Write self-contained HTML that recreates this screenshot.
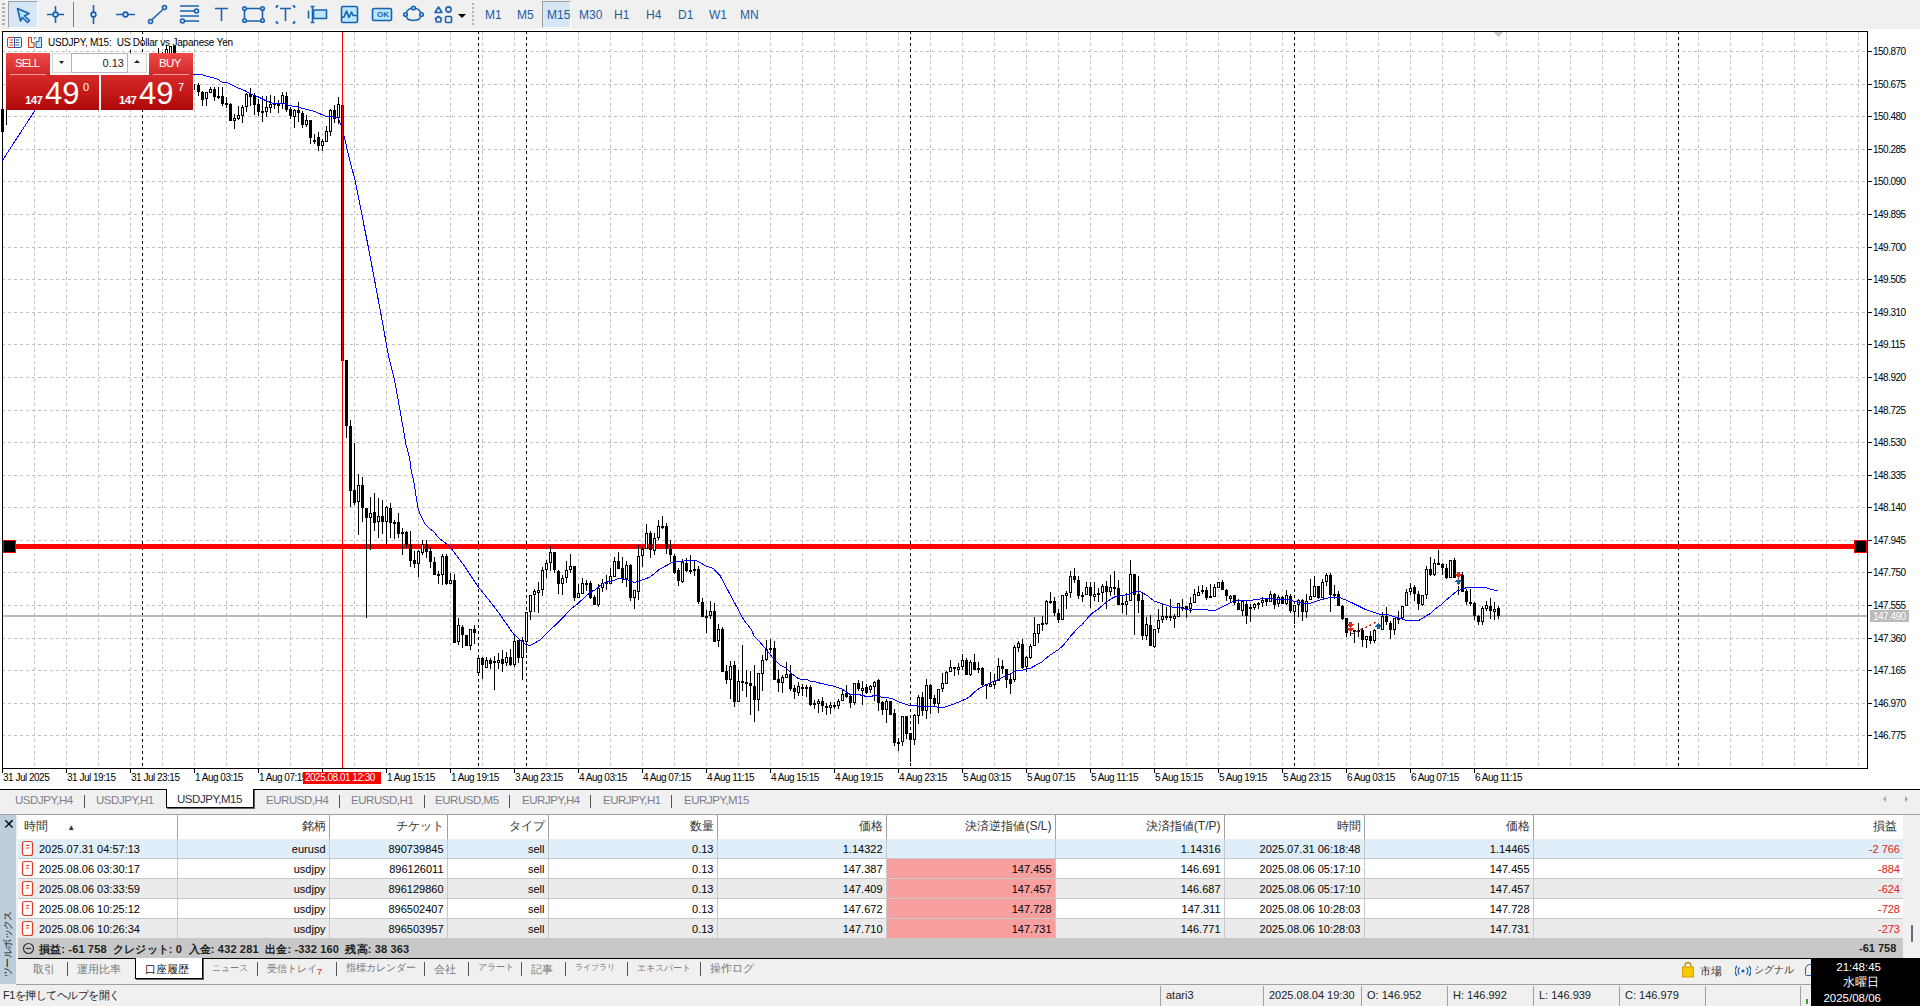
<!DOCTYPE html>
<html><head><meta charset="utf-8">
<style>
*{margin:0;padding:0;box-sizing:border-box}
html,body{width:1920px;height:1006px;overflow:hidden;background:#f0f0f0;font-family:"Liberation Sans",sans-serif;color:#000}
.a{position:absolute}
.pl{font-family:"Liberation Sans",sans-serif;font-size:10px;letter-spacing:-0.5px;fill:#000}
.tb{position:absolute;top:0;left:0;width:1920px;height:29px;background:#f0f0f0}
.tf{position:absolute;top:8px;font-size:12px;color:#1c5ba3;}
.sel{position:absolute;background:#d5e6f5;border-left:1px solid #a0a0a0;border-top:1px solid #a0a0a0;border-right:1px solid #fff;border-bottom:1px solid #fff}
.ctab{position:absolute;top:794px;font-size:11.5px;letter-spacing:-0.45px;color:#7d7d8c;white-space:nowrap}
.csep{position:absolute;top:795px;width:1px;height:13px;background:#555}
table.t{position:absolute;left:18px;top:815px;border-collapse:collapse;font-size:11px;table-layout:fixed}
.t td{height:19px;border-right:1px solid #c8c8c8;border-bottom:1px solid #c8c8c8;text-align:right;padding:1px 3px 0 0;line-height:18px;white-space:nowrap;overflow:hidden}
.t tr.h td{height:24px;vertical-align:top;padding-top:2px;background:#fff;font-size:12px;color:#333;border-bottom:none;border-right:1px solid #a0a0a0}
.t td:last-child{border-right:none}
.t tr.r1 td{background:#e0eefa;height:18px}
.t tr.w td{background:#fff}
.t tr.g td{background:#ebebeb}
.t td.pk{background:#f8a0a0 !important}
.t td.neg{color:#e02020}
.btab{position:absolute;top:962px;font-size:11px;color:#7a7a7a;white-space:nowrap;height:16px}
.bsep{position:absolute;top:962px;width:1px;height:14px;background:#555}
.st{position:absolute;top:989px;font-size:11px;color:#222;white-space:nowrap}
.ssep{position:absolute;top:986px;width:1px;height:20px;background:#a0a0a0}
</style></head><body>
<!-- toolbar -->
<div class="tb">
  <div class="a" style="left:2px;top:3px;width:3px;height:24px;background:repeating-linear-gradient(#b0b0b0 0 2px,transparent 2px 4px)"></div>
  <div class="sel" style="left:8px;top:1px;width:30px;height:27px"></div>
  <div class="sel" style="left:542px;top:1px;width:29px;height:27px"></div>
  <div class="a" style="left:73px;top:2px;width:1px;height:25px;background:#7a7a88"></div>
  <div class="a" style="left:472px;top:3px;width:2px;height:24px;background:repeating-linear-gradient(#b0b0b0 0 2px,transparent 2px 4px)"></div>
  <svg class="a" style="left:0;top:0" width="480" height="29" fill="none" stroke="#1a62b0" stroke-width="1.6" stroke-linejoin="round">
    <!-- cursor -->
    <path d="M17.5 8.5L29 13.5L24.5 16L29.5 20.5L27.5 22.5L22.5 17.5L20.5 21Z" fill="#aee0f8"/>
    <!-- crosshair -->
    <path d="M47 14.5H53M58 14.5H64M55.5 6V12M55.5 17V23"/><circle cx="55.5" cy="14.5" r="2.4" fill="#c8ecfb"/>
    <!-- vline -->
    <path d="M93.5 5V12M93.5 17V24"/><circle cx="93.5" cy="14.5" r="2.4" fill="#c8ecfb"/>
    <!-- hline -->
    <path d="M116 14.5H123M128 14.5H135"/><circle cx="125.5" cy="14.5" r="2.4" fill="#c8ecfb"/>
    <!-- trend -->
    <path d="M151.5 20L163.5 9"/><circle cx="150.5" cy="21.5" r="2" fill="#c8ecfb"/><circle cx="164.5" cy="7.5" r="2" fill="#c8ecfb"/>
    <!-- channel -->
    <path d="M180 6H199M180 11H194M180 16H199M184 21H199"/><circle cx="196.5" cy="11" r="2" fill="#c8ecfb"/><circle cx="182.5" cy="21" r="2" fill="#c8ecfb"/>
    <!-- T -->
    <path d="M215 8.5H228M221.5 8.5V21"/>
    <!-- rect -->
    <path d="M246 8.5H261M246 21H261M244.5 10V19.5M262.5 10V19.5"/><circle cx="244.5" cy="8.5" r="1.8" fill="#c8ecfb"/><circle cx="262.5" cy="8.5" r="1.8" fill="#c8ecfb"/><circle cx="244.5" cy="20.5" r="1.8" fill="#c8ecfb"/><circle cx="262.5" cy="20.5" r="1.8" fill="#c8ecfb"/>
    <!-- text label -->
    <path d="M276.5 8V6H278.5M292.5 6H294.5V8M276.5 21V23H278.5M292.5 23H294.5V21M280 8.5H291M285.5 8.5V21"/>
    <!-- edit -->
    <path d="M308.5 10.5V18.5M312.5 6.5V22.5M310.5 6.5H314.5M310.5 22.5H314.5"/><rect x="313.5" y="10" width="13" height="8.5" fill="#b8e6fa"/>
    <!-- chart -->
    <rect x="341.5" y="6.5" width="16" height="16" rx="1.5" fill="#b8e6fa"/><path d="M342 17H344L346.5 11L349 17.5L351.5 12L353 15.5H357"/>
    <!-- ok -->
    <rect x="372.5" y="8.5" width="19" height="12" rx="1.5" fill="#b8e6fa"/>
    <!-- ellipse -->
    <path d="M406 14.5C406 10 410 8 413.5 8C417 8 421 10 421 14.5C421 19 417 20.5 413.5 20.5C410 20.5 406 19 406 14.5Z"/><circle cx="413.5" cy="8" r="1.8" fill="#c8ecfb"/><circle cx="405.5" cy="14.5" r="1.8" fill="#c8ecfb"/><circle cx="421.5" cy="14.5" r="1.8" fill="#c8ecfb"/>
    <!-- shapes -->
    <path d="M438.5 7L442 12.5H435Z"/><circle cx="448.5" cy="9.5" r="2.6"/><path d="M438.5 16.5L441.5 18.5L440.5 22H436.5L435.5 18.5Z"/><rect x="445.5" y="16.5" width="6" height="6" rx="1"/>
    <path d="M458 14H466L462 18Z" fill="#000" stroke="none"/>
  </svg>
  <div class="a" style="left:377px;top:10px;font-size:8px;font-weight:bold;color:#1a62b0">OK</div>
  <div class="tf" style="left:485px">M1</div>
  <div class="tf" style="left:517px">M5</div>
  <div class="tf" style="left:547px">M15</div>
  <div class="tf" style="left:579px">M30</div>
  <div class="tf" style="left:614px">H1</div>
  <div class="tf" style="left:646px">H4</div>
  <div class="tf" style="left:678px">D1</div>
  <div class="tf" style="left:709px">W1</div>
  <div class="tf" style="left:740px">MN</div>
</div>
<!-- chart -->
<svg width="1920" height="760" viewBox="0 29 1920 760" style="position:absolute;left:0;top:29px" shape-rendering="crispEdges">
<rect x="0" y="29" width="1920" height="760" fill="#fff"/>
<path d="M34.5 31V768 M66.5 31V768 M98.5 31V768 M130.5 31V768 M162.5 31V768 M194.5 31V768 M226.5 31V768 M258.5 31V768 M290.5 31V768 M322.5 31V768 M354.5 31V768 M386.5 31V768 M418.5 31V768 M450.5 31V768 M482.5 31V768 M514.5 31V768 M546.5 31V768 M578.5 31V768 M610.5 31V768 M642.5 31V768 M674.5 31V768 M706.5 31V768 M738.5 31V768 M770.5 31V768 M802.5 31V768 M834.5 31V768 M866.5 31V768 M898.5 31V768 M930.5 31V768 M962.5 31V768 M994.5 31V768 M1026.5 31V768 M1058.5 31V768 M1090.5 31V768 M1122.5 31V768 M1154.5 31V768 M1186.5 31V768 M1218.5 31V768 M1250.5 31V768 M1282.5 31V768 M1314.5 31V768 M1346.5 31V768 M1378.5 31V768 M1410.5 31V768 M1442.5 31V768 M1474.5 31V768 M1506.5 31V768 M1538.5 31V768 M1570.5 31V768 M1602.5 31V768 M1634.5 31V768 M1666.5 31V768 M1698.5 31V768 M1730.5 31V768 M1762.5 31V768 M1794.5 31V768 M1826.5 31V768 M1858.5 31V768" stroke="#c0c0c0" stroke-width="1" stroke-dasharray="3 3" fill="none"/>
<path d="M2 51.5H1867 M2 84.5H1867 M2 116.5H1867 M2 149.5H1867 M2 181.5H1867 M2 214.5H1867 M2 247.5H1867 M2 279.5H1867 M2 312.5H1867 M2 344.5H1867 M2 377.5H1867 M2 410.5H1867 M2 442.5H1867 M2 475.5H1867 M2 507.5H1867 M2 540.5H1867 M2 572.5H1867 M2 605.5H1867 M2 638.5H1867 M2 670.5H1867 M2 703.5H1867 M2 735.5H1867" stroke="#c0c0c0" stroke-width="1" stroke-dasharray="3 3" fill="none"/>
<path d="M142.5 31V768 M478.5 31V768 M526.5 31V768 M910.5 31V768 M1294.5 31V768 M1678.5 31V768" stroke="#000" stroke-width="1" stroke-dasharray="3 3" fill="none"/>
<path d="M2.5 768V31.5H1867.5V768.5H2" stroke="#000" stroke-width="1" fill="none"/>
<path d="M2.5 31.5V768.5" stroke="#000" stroke-width="1" fill="none"/>
<text x="1873" y="55" class="pl">150.870</text>
<text x="1873" y="88" class="pl">150.675</text>
<text x="1873" y="120" class="pl">150.480</text>
<text x="1873" y="153" class="pl">150.285</text>
<text x="1873" y="185" class="pl">150.090</text>
<text x="1873" y="218" class="pl">149.895</text>
<text x="1873" y="251" class="pl">149.700</text>
<text x="1873" y="283" class="pl">149.505</text>
<text x="1873" y="316" class="pl">149.310</text>
<text x="1873" y="348" class="pl">149.115</text>
<text x="1873" y="381" class="pl">148.920</text>
<text x="1873" y="414" class="pl">148.725</text>
<text x="1873" y="446" class="pl">148.530</text>
<text x="1873" y="479" class="pl">148.335</text>
<text x="1873" y="511" class="pl">148.140</text>
<text x="1873" y="544" class="pl">147.945</text>
<text x="1873" y="576" class="pl">147.750</text>
<text x="1873" y="609" class="pl">147.555</text>
<text x="1873" y="642" class="pl">147.360</text>
<text x="1873" y="674" class="pl">147.165</text>
<text x="1873" y="707" class="pl">146.970</text>
<text x="1873" y="739" class="pl">146.775</text>
<path d="M1868 51.5H1872 M1868 84.5H1872 M1868 116.5H1872 M1868 149.5H1872 M1868 181.5H1872 M1868 214.5H1872 M1868 247.5H1872 M1868 279.5H1872 M1868 312.5H1872 M1868 344.5H1872 M1868 377.5H1872 M1868 410.5H1872 M1868 442.5H1872 M1868 475.5H1872 M1868 507.5H1872 M1868 540.5H1872 M1868 572.5H1872 M1868 605.5H1872 M1868 638.5H1872 M1868 670.5H1872 M1868 703.5H1872 M1868 735.5H1872" stroke="#000" stroke-width="1" fill="none"/>
<text x="3" y="781" class="pl">31 Jul 2025</text>
<text x="67" y="781" class="pl">31 Jul 19:15</text>
<text x="131" y="781" class="pl">31 Jul 23:15</text>
<text x="195" y="781" class="pl">1 Aug 03:15</text>
<text x="259" y="781" class="pl">1 Aug 07:15</text>
<text x="387" y="781" class="pl">1 Aug 15:15</text>
<text x="451" y="781" class="pl">1 Aug 19:15</text>
<text x="515" y="781" class="pl">3 Aug 23:15</text>
<text x="579" y="781" class="pl">4 Aug 03:15</text>
<text x="643" y="781" class="pl">4 Aug 07:15</text>
<text x="707" y="781" class="pl">4 Aug 11:15</text>
<text x="771" y="781" class="pl">4 Aug 15:15</text>
<text x="835" y="781" class="pl">4 Aug 19:15</text>
<text x="899" y="781" class="pl">4 Aug 23:15</text>
<text x="963" y="781" class="pl">5 Aug 03:15</text>
<text x="1027" y="781" class="pl">5 Aug 07:15</text>
<text x="1091" y="781" class="pl">5 Aug 11:15</text>
<text x="1155" y="781" class="pl">5 Aug 15:15</text>
<text x="1219" y="781" class="pl">5 Aug 19:15</text>
<text x="1283" y="781" class="pl">5 Aug 23:15</text>
<text x="1347" y="781" class="pl">6 Aug 03:15</text>
<text x="1411" y="781" class="pl">6 Aug 07:15</text>
<text x="1475" y="781" class="pl">6 Aug 11:15</text>
<path d="M2.5 769V773 M66.5 769V773 M130.5 769V773 M194.5 769V773 M258.5 769V773 M322.5 769V773 M386.5 769V773 M450.5 769V773 M514.5 769V773 M578.5 769V773 M642.5 769V773 M706.5 769V773 M770.5 769V773 M834.5 769V773 M898.5 769V773 M962.5 769V773 M1026.5 769V773 M1090.5 769V773 M1154.5 769V773 M1218.5 769V773 M1282.5 769V773 M1346.5 769V773 M1410.5 769V773 M1474.5 769V773" stroke="#000" stroke-width="1" fill="none"/>
<rect x="3" y="615" width="1864" height="2" fill="#bababa"/>
<rect x="3" y="544" width="1864" height="5" fill="#ff0000"/>
<path d="M2.5 100V132 M6.5 100V125 M10.5 56V109 M14.5 56V108 M18.5 56V108 M22.5 56V107 M26.5 56V107 M30.5 56V106 M34.5 56V106 M38.5 56V105 M42.5 56V105 M46.5 56V104 M50.5 56V104 M54.5 56V103 M58.5 56V103 M62.5 56V102 M66.5 56V102 M70.5 56V101 M74.5 56V101 M78.5 56V100 M82.5 56V100 M86.5 56V99 M90.5 56V99 M94.5 56V98 M98.5 56V98 M102.5 56V97 M106.5 56V97 M110.5 56V97 M114.5 56V96 M118.5 56V96 M122.5 56V95 M126.5 56V95 M130.5 50V94 M134.5 56V94 M138.5 56V93 M142.5 56V93 M146.5 56V92 M150.5 56V92 M154.5 56V91 M158.5 48V91 M162.5 52V90 M166.5 45V90 M170.5 46V89 M174.5 45V89 M178.5 56V88 M182.5 56V88 M186.5 56V87 M190.5 56V87 M194.5 84V90 M198.5 83V96 M202.5 91V106 M206.5 92V106 M210.5 87V93 M214.5 87V101 M218.5 87V99 M222.5 87V106 M226.5 97V108 M230.5 103V121 M234.5 114V129 M238.5 106V120 M242.5 105V123 M246.5 93V112 M250.5 88V106 M254.5 93V115 M258.5 99V116 M262.5 96V122 M266.5 96V117 M270.5 95V113 M274.5 96V109 M278.5 100V113 M282.5 92V109 M286.5 92V112 M290.5 107V119 M294.5 109V128 M298.5 102V122 M302.5 111V128 M306.5 115V127 M310.5 120V144 M314.5 134V144 M318.5 132V151 M322.5 139V151 M326.5 126V142 M330.5 109V136 M334.5 105V123 M338.5 97V124 M342.5 100V361 M346.5 360V438 M350.5 420V507 M354.5 443V505 M358.5 474V535 M362.5 477V522 M366.5 508V618 M370.5 497V550 M374.5 493V531 M378.5 498V538 M382.5 500V534 M386.5 506V544 M390.5 503V538 M394.5 520V539 M398.5 513V538 M402.5 528V555 M406.5 531V548 M410.5 531V567 M414.5 551V568 M418.5 550V577 M422.5 540V555 M426.5 540V558 M430.5 547V568 M434.5 557V575 M438.5 571V584 M442.5 554V585 M446.5 554V585 M450.5 573V584 M454.5 574V643 M458.5 618V645 M462.5 625V648 M466.5 635V646 M470.5 629V650 M474.5 625V644 M478.5 655V676 M482.5 657V679 M486.5 657V668 M490.5 658V669 M494.5 656V690 M498.5 653V669 M502.5 650V672 M506.5 652V666 M510.5 649V666 M514.5 634V667 M518.5 640V663 M522.5 637V680 M526.5 612V653 M530.5 595V620 M534.5 589V612 M538.5 582V613 M542.5 567V596 M546.5 560V578 M550.5 546V571 M554.5 552V573 M558.5 570V594 M562.5 575V595 M566.5 561V583 M570.5 554V573 M574.5 566V601 M578.5 584V598 M582.5 578V594 M586.5 580V591 M590.5 581V599 M594.5 595V605 M598.5 584V607 M602.5 579V592 M606.5 575V590 M610.5 568V584 M614.5 557V577 M618.5 552V569 M622.5 557V583 M626.5 561V587 M630.5 564V601 M634.5 590V609 M638.5 545V600 M642.5 547V567 M646.5 524V549 M650.5 531V558 M654.5 533V555 M658.5 520V540 M662.5 516V529 M666.5 523V554 M670.5 540V562 M674.5 554V574 M678.5 568V586 M682.5 559V583 M686.5 558V572 M690.5 555V574 M694.5 561V576 M698.5 566V604 M702.5 598V617 M706.5 610V633 M710.5 601V619 M714.5 603V642 M718.5 624V647 M722.5 627V672 M726.5 665V684 M730.5 661V699 M734.5 661V707 M738.5 670V702 M742.5 645V691 M746.5 670V697 M750.5 671V715 M754.5 665V722 M758.5 673V711 M762.5 655V691 M766.5 640V661 M770.5 639V653 M774.5 641V680 M778.5 670V692 M782.5 675V693 M786.5 662V678 M790.5 665V691 M794.5 685V699 M798.5 682V696 M802.5 684V696 M806.5 685V697 M810.5 685V706 M814.5 700V709 M818.5 699V713 M822.5 697V712 M826.5 703V715 M830.5 702V714 M834.5 702V709 M838.5 699V709 M842.5 689V701 M846.5 685V698 M850.5 695V708 M854.5 683V705 M858.5 680V691 M862.5 681V705 M866.5 684V694 M870.5 685V693 M874.5 681V701 M878.5 679V711 M882.5 701V715 M886.5 699V723 M890.5 701V715 M894.5 709V746 M898.5 738V751 M902.5 716V746 M906.5 716V739 M910.5 733V762 M914.5 714V745 M918.5 695V724 M922.5 692V716 M926.5 679V719 M930.5 684V714 M934.5 695V707 M938.5 689V713 M942.5 673V692 M946.5 671V684 M950.5 660V672 M954.5 667V676 M958.5 663V675 M962.5 654V670 M966.5 658V675 M970.5 660V676 M974.5 654V670 M978.5 662V673 M982.5 667V686 M986.5 684V699 M990.5 672V687 M994.5 674V689 M998.5 658V681 M1002.5 660V674 M1006.5 669V688 M1010.5 674V694 M1014.5 645V682 M1018.5 641V652 M1022.5 639V669 M1026.5 656V672 M1030.5 644V659 M1034.5 617V646 M1038.5 624V643 M1042.5 616V631 M1046.5 600V625 M1050.5 592V604 M1054.5 597V616 M1058.5 609V623 M1062.5 595V620 M1066.5 591V609 M1070.5 571V598 M1074.5 568V583 M1078.5 576V599 M1082.5 592V602 M1086.5 582V595 M1090.5 582V608 M1094.5 582V601 M1098.5 588V602 M1102.5 584V602 M1106.5 581V609 M1110.5 575V596 M1114.5 571V595 M1118.5 580V605 M1122.5 596V613 M1126.5 593V615 M1130.5 560V601 M1134.5 574V635 M1138.5 576V613 M1142.5 592V640 M1146.5 617V640 M1150.5 615V646 M1154.5 629V648 M1158.5 609V633 M1162.5 604V623 M1166.5 607V620 M1170.5 599V621 M1174.5 614V628 M1178.5 603V617 M1182.5 599V611 M1186.5 606V618 M1190.5 597V613 M1194.5 589V603 M1198.5 586V596 M1202.5 585V594 M1206.5 587V600 M1210.5 584V598 M1214.5 584V597 M1218.5 582V588 M1222.5 580V590 M1226.5 589V601 M1230.5 595V602 M1234.5 595V605 M1238.5 599V610 M1242.5 601V616 M1246.5 601V624 M1250.5 604V622 M1254.5 603V610 M1258.5 602V609 M1262.5 597V607 M1266.5 598V606 M1270.5 591V602 M1274.5 593V609 M1278.5 595V607 M1282.5 596V604 M1286.5 590V605 M1290.5 594V613 M1294.5 605V624 M1298.5 599V617 M1302.5 599V621 M1306.5 594V618 M1310.5 579V600 M1314.5 576V597 M1318.5 586V599 M1322.5 579V598 M1326.5 573V586 M1330.5 573V612 M1334.5 585V599 M1338.5 591V606 M1342.5 605V620 M1346.5 618V637 M1350.5 628V636 M1354.5 630V643 M1358.5 623V637 M1362.5 628V647 M1366.5 636V648 M1370.5 631V644 M1374.5 629V643 M1378.5 624V629 M1382.5 612V630 M1386.5 607V625 M1390.5 621V639 M1394.5 618V635 M1398.5 611V624 M1402.5 606V619 M1406.5 589V606 M1410.5 583V595 M1414.5 585V601 M1418.5 591V610 M1422.5 595V606 M1426.5 566V599 M1430.5 557V576 M1434.5 559V576 M1438.5 550V565 M1442.5 563V575 M1446.5 564V579 M1450.5 560V578 M1454.5 558V578 M1458.5 586V595 M1462.5 572V592 M1466.5 589V605 M1470.5 589V606 M1474.5 602V620 M1478.5 615V625 M1482.5 606V625 M1486.5 601V611 M1490.5 598V619 M1494.5 602V620 M1498.5 606V619" stroke="#000" stroke-width="1" fill="none"/>
<path d="M1 109h3v23h-3z M9 60h3v46h-3z M13 60h3v45h-3z M17 60h3v45h-3z M21 60h3v44h-3z M25 60h3v44h-3z M29 60h3v43h-3z M33 60h3v43h-3z M37 60h3v42h-3z M41 60h3v42h-3z M45 60h3v41h-3z M49 60h3v41h-3z M53 60h3v40h-3z M57 60h3v40h-3z M61 60h3v39h-3z M65 60h3v39h-3z M69 60h3v38h-3z M73 60h3v38h-3z M77 60h3v37h-3z M81 60h3v37h-3z M85 60h3v36h-3z M89 60h3v36h-3z M93 60h3v35h-3z M97 60h3v35h-3z M101 60h3v34h-3z M105 60h3v34h-3z M109 60h3v34h-3z M113 60h3v33h-3z M117 60h3v33h-3z M121 60h3v32h-3z M125 60h3v32h-3z M129 54h3v37h-3z M133 60h3v31h-3z M137 60h3v30h-3z M141 60h3v30h-3z M145 60h3v29h-3z M149 60h3v29h-3z M153 60h3v28h-3z M157 54h3v34h-3z M161 54h3v33h-3z M173 46h3v40h-3z M177 60h3v25h-3z M181 60h3v25h-3z M185 60h3v24h-3z M189 60h3v24h-3z M197 85h3v7h-3z M201 92h3v8h-3z M213 89h3v8h-3z M217 96h3v2h-3z M221 96h3v8h-3z M225 103h3v2h-3z M229 104h3v17h-3z M249 94h3v3h-3z M253 95h3v10h-3z M257 104h3v8h-3z M261 111h3v2h-3z M273 103h3v2h-3z M277 104h3v2h-3z M285 96h3v14h-3z M289 109h3v7h-3z M297 110h3v3h-3z M301 113h3v12h-3z M309 120h3v18h-3z M313 140h3v2h-3z M317 137h3v9h-3z M333 110h3v9h-3z M341 105h3v256h-3z M345 360h3v66h-3z M349 426h3v65h-3z M353 490h3v13h-3z M361 485h3v23h-3z M365 508h3v10h-3z M373 512h3v11h-3z M381 516h3v6h-3z M389 508h3v15h-3z M393 522h3v2h-3z M397 522h3v12h-3z M401 532h3v2h-3z M405 532h3v13h-3z M409 544h3v17h-3z M413 560h3v4h-3z M425 544h3v8h-3z M429 551h3v11h-3z M433 562h3v13h-3z M437 574h3v2h-3z M445 556h3v28h-3z M453 580h3v63h-3z M461 627h3v8h-3z M465 635h3v11h-3z M473 629h3v4h-3z M481 658h3v7h-3z M489 660h3v4h-3z M493 661h3v2h-3z M501 659h3v5h-3z M509 657h3v8h-3z M517 640h3v18h-3z M553 552h3v18h-3z M557 571h3v13h-3z M573 566h3v32h-3z M585 583h3v2h-3z M589 583h3v15h-3z M593 597h3v8h-3z M605 582h3v2h-3z M617 561h3v8h-3z M621 568h3v11h-3z M629 565h3v33h-3z M649 533h3v17h-3z M661 526h3v2h-3z M665 526h3v23h-3z M669 549h3v6h-3z M673 556h3v17h-3z M677 570h3v11h-3z M685 563h3v8h-3z M689 570h3v2h-3z M693 569h3v2h-3z M697 569h3v33h-3z M701 602h3v15h-3z M705 616h3v2h-3z M713 611h3v31h-3z M721 629h3v43h-3z M725 671h3v9h-3z M733 665h3v37h-3z M741 681h3v2h-3z M745 682h3v2h-3z M749 683h3v3h-3z M753 686h3v14h-3z M769 648h3v2h-3z M773 648h3v32h-3z M777 679h3v4h-3z M789 674h3v15h-3z M793 688h3v4h-3z M801 687h3v2h-3z M805 687h3v2h-3z M809 687h3v18h-3z M813 703h3v2h-3z M821 701h3v5h-3z M825 706h3v2h-3z M833 705h3v2h-3z M845 693h3v4h-3z M849 696h3v7h-3z M857 683h3v6h-3z M865 687h3v6h-3z M877 680h3v23h-3z M881 702h3v8h-3z M889 701h3v14h-3z M893 713h3v30h-3z M897 742h3v2h-3z M905 716h3v18h-3z M909 733h3v7h-3z M921 697h3v14h-3z M929 685h3v14h-3z M933 698h3v6h-3z M953 667h3v2h-3z M965 660h3v15h-3z M973 662h3v8h-3z M977 668h3v2h-3z M981 668h3v17h-3z M985 684h3v2h-3z M1001 666h3v3h-3z M1005 669h3v11h-3z M1009 679h3v5h-3z M1021 644h3v24h-3z M1041 623h3v2h-3z M1049 601h3v2h-3z M1053 601h3v12h-3z M1057 613h3v7h-3z M1073 576h3v4h-3z M1077 580h3v16h-3z M1081 595h3v2h-3z M1089 587h3v9h-3z M1097 593h3v2h-3z M1105 586h3v6h-3z M1113 587h3v2h-3z M1117 588h3v17h-3z M1121 603h3v2h-3z M1133 574h3v21h-3z M1137 594h3v7h-3z M1141 600h3v36h-3z M1149 625h3v21h-3z M1165 616h3v2h-3z M1169 616h3v2h-3z M1181 607h3v2h-3z M1185 606h3v3h-3z M1201 590h3v2h-3z M1205 590h3v8h-3z M1209 596h3v2h-3z M1221 582h3v8h-3z M1225 590h3v6h-3z M1233 595h3v8h-3z M1237 603h3v7h-3z M1245 604h3v12h-3z M1249 607h3v2h-3z M1257 603h3v2h-3z M1265 599h3v3h-3z M1273 594h3v11h-3z M1281 597h3v7h-3z M1289 596h3v15h-3z M1301 600h3v12h-3z M1317 586h3v12h-3z M1329 575h3v20h-3z M1333 594h3v2h-3z M1337 594h3v12h-3z M1341 606h3v13h-3z M1345 618h3v15h-3z M1353 630h3v2h-3z M1357 630h3v2h-3z M1361 630h3v10h-3z M1369 636h3v5h-3z M1385 616h3v6h-3z M1389 623h3v7h-3z M1397 618h3v2h-3z M1413 587h3v7h-3z M1417 594h3v10h-3z M1429 569h3v6h-3z M1437 563h3v2h-3z M1441 564h3v4h-3z M1445 568h3v10h-3z M1453 560h3v18h-3z M1461 575h3v17h-3z M1465 591h3v11h-3z M1469 602h3v2h-3z M1473 603h3v13h-3z M1477 616h3v6h-3z M1489 606h3v5h-3z M1497 608h3v8h-3z" fill="#000"/>
<rect x="165.5" y="49.5" width="2" height="37" fill="#fff" stroke="#000"/>
<rect x="169.5" y="46.5" width="2" height="39" fill="#fff" stroke="#000"/>
<rect x="205.5" y="92.5" width="2" height="6" fill="#fff" stroke="#000"/>
<rect x="209.5" y="89.5" width="2" height="3" fill="#fff" stroke="#000"/>
<rect x="233.5" y="118.5" width="2" height="2" fill="#fff" stroke="#000"/>
<rect x="237.5" y="115.5" width="2" height="3" fill="#fff" stroke="#000"/>
<rect x="241.5" y="107.5" width="2" height="8" fill="#fff" stroke="#000"/>
<rect x="245.5" y="94.5" width="2" height="12" fill="#fff" stroke="#000"/>
<rect x="265.5" y="107.5" width="2" height="4" fill="#fff" stroke="#000"/>
<rect x="269.5" y="104.5" width="2" height="3" fill="#fff" stroke="#000"/>
<rect x="281.5" y="95.5" width="2" height="8" fill="#fff" stroke="#000"/>
<rect x="293.5" y="110.5" width="2" height="6" fill="#fff" stroke="#000"/>
<rect x="305.5" y="120.5" width="2" height="4" fill="#fff" stroke="#000"/>
<rect x="321.5" y="141.5" width="2" height="4" fill="#fff" stroke="#000"/>
<rect x="325.5" y="131.5" width="2" height="10" fill="#fff" stroke="#000"/>
<rect x="329.5" y="110.5" width="2" height="21" fill="#fff" stroke="#000"/>
<rect x="337.5" y="104.5" width="2" height="13" fill="#fff" stroke="#000"/>
<rect x="357.5" y="485.5" width="2" height="16" fill="#fff" stroke="#000"/>
<rect x="369.5" y="513.5" width="2" height="4" fill="#fff" stroke="#000"/>
<rect x="377.5" y="516.5" width="2" height="5" fill="#fff" stroke="#000"/>
<rect x="385.5" y="507.5" width="2" height="14" fill="#fff" stroke="#000"/>
<rect x="417.5" y="551.5" width="2" height="12" fill="#fff" stroke="#000"/>
<rect x="421.5" y="544.5" width="2" height="8" fill="#fff" stroke="#000"/>
<rect x="441.5" y="556.5" width="2" height="18" fill="#fff" stroke="#000"/>
<rect x="449.5" y="580.5" width="2" height="3" fill="#fff" stroke="#000"/>
<rect x="457.5" y="625.5" width="2" height="16" fill="#fff" stroke="#000"/>
<rect x="469.5" y="629.5" width="2" height="16" fill="#fff" stroke="#000"/>
<rect x="477.5" y="658.5" width="2" height="14" fill="#fff" stroke="#000"/>
<rect x="485.5" y="660.5" width="2" height="7" fill="#fff" stroke="#000"/>
<rect x="497.5" y="660.5" width="2" height="2" fill="#fff" stroke="#000"/>
<rect x="505.5" y="657.5" width="2" height="5" fill="#fff" stroke="#000"/>
<rect x="513.5" y="641.5" width="2" height="23" fill="#fff" stroke="#000"/>
<rect x="521.5" y="640.5" width="2" height="17" fill="#fff" stroke="#000"/>
<rect x="525.5" y="612.5" width="2" height="29" fill="#fff" stroke="#000"/>
<rect x="529.5" y="595.5" width="2" height="16" fill="#fff" stroke="#000"/>
<rect x="533.5" y="591.5" width="2" height="3" fill="#fff" stroke="#000"/>
<rect x="537.5" y="590.5" width="2" height="2" fill="#fff" stroke="#000"/>
<rect x="541.5" y="570.5" width="2" height="19" fill="#fff" stroke="#000"/>
<rect x="545.5" y="563.5" width="2" height="6" fill="#fff" stroke="#000"/>
<rect x="549.5" y="552.5" width="2" height="10" fill="#fff" stroke="#000"/>
<rect x="561.5" y="578.5" width="2" height="5" fill="#fff" stroke="#000"/>
<rect x="565.5" y="570.5" width="2" height="7" fill="#fff" stroke="#000"/>
<rect x="569.5" y="566.5" width="2" height="3" fill="#fff" stroke="#000"/>
<rect x="577.5" y="593.5" width="2" height="4" fill="#fff" stroke="#000"/>
<rect x="581.5" y="583.5" width="2" height="10" fill="#fff" stroke="#000"/>
<rect x="597.5" y="588.5" width="2" height="16" fill="#fff" stroke="#000"/>
<rect x="601.5" y="583.5" width="2" height="4" fill="#fff" stroke="#000"/>
<rect x="609.5" y="576.5" width="2" height="7" fill="#fff" stroke="#000"/>
<rect x="613.5" y="561.5" width="2" height="15" fill="#fff" stroke="#000"/>
<rect x="625.5" y="565.5" width="2" height="13" fill="#fff" stroke="#000"/>
<rect x="633.5" y="590.5" width="2" height="7" fill="#fff" stroke="#000"/>
<rect x="637.5" y="556.5" width="2" height="35" fill="#fff" stroke="#000"/>
<rect x="641.5" y="549.5" width="2" height="6" fill="#fff" stroke="#000"/>
<rect x="645.5" y="533.5" width="2" height="15" fill="#fff" stroke="#000"/>
<rect x="653.5" y="538.5" width="2" height="12" fill="#fff" stroke="#000"/>
<rect x="657.5" y="526.5" width="2" height="11" fill="#fff" stroke="#000"/>
<rect x="681.5" y="562.5" width="2" height="19" fill="#fff" stroke="#000"/>
<rect x="709.5" y="611.5" width="2" height="4" fill="#fff" stroke="#000"/>
<rect x="717.5" y="629.5" width="2" height="11" fill="#fff" stroke="#000"/>
<rect x="729.5" y="666.5" width="2" height="13" fill="#fff" stroke="#000"/>
<rect x="737.5" y="681.5" width="2" height="20" fill="#fff" stroke="#000"/>
<rect x="757.5" y="673.5" width="2" height="26" fill="#fff" stroke="#000"/>
<rect x="761.5" y="660.5" width="2" height="13" fill="#fff" stroke="#000"/>
<rect x="765.5" y="649.5" width="2" height="10" fill="#fff" stroke="#000"/>
<rect x="781.5" y="677.5" width="2" height="5" fill="#fff" stroke="#000"/>
<rect x="785.5" y="674.5" width="2" height="3" fill="#fff" stroke="#000"/>
<rect x="797.5" y="686.5" width="2" height="6" fill="#fff" stroke="#000"/>
<rect x="817.5" y="701.5" width="2" height="2" fill="#fff" stroke="#000"/>
<rect x="829.5" y="705.5" width="2" height="2" fill="#fff" stroke="#000"/>
<rect x="837.5" y="701.5" width="2" height="4" fill="#fff" stroke="#000"/>
<rect x="841.5" y="694.5" width="2" height="6" fill="#fff" stroke="#000"/>
<rect x="853.5" y="683.5" width="2" height="19" fill="#fff" stroke="#000"/>
<rect x="861.5" y="688.5" width="2" height="2" fill="#fff" stroke="#000"/>
<rect x="869.5" y="686.5" width="2" height="3" fill="#fff" stroke="#000"/>
<rect x="873.5" y="682.5" width="2" height="4" fill="#fff" stroke="#000"/>
<rect x="885.5" y="701.5" width="2" height="8" fill="#fff" stroke="#000"/>
<rect x="901.5" y="716.5" width="2" height="25" fill="#fff" stroke="#000"/>
<rect x="913.5" y="715.5" width="2" height="24" fill="#fff" stroke="#000"/>
<rect x="917.5" y="697.5" width="2" height="18" fill="#fff" stroke="#000"/>
<rect x="925.5" y="685.5" width="2" height="25" fill="#fff" stroke="#000"/>
<rect x="937.5" y="689.5" width="2" height="14" fill="#fff" stroke="#000"/>
<rect x="941.5" y="683.5" width="2" height="5" fill="#fff" stroke="#000"/>
<rect x="945.5" y="672.5" width="2" height="11" fill="#fff" stroke="#000"/>
<rect x="949.5" y="667.5" width="2" height="4" fill="#fff" stroke="#000"/>
<rect x="957.5" y="667.5" width="2" height="2" fill="#fff" stroke="#000"/>
<rect x="961.5" y="660.5" width="2" height="6" fill="#fff" stroke="#000"/>
<rect x="969.5" y="662.5" width="2" height="12" fill="#fff" stroke="#000"/>
<rect x="989.5" y="684.5" width="2" height="2" fill="#fff" stroke="#000"/>
<rect x="993.5" y="681.5" width="2" height="3" fill="#fff" stroke="#000"/>
<rect x="997.5" y="666.5" width="2" height="14" fill="#fff" stroke="#000"/>
<rect x="1013.5" y="647.5" width="2" height="32" fill="#fff" stroke="#000"/>
<rect x="1017.5" y="643.5" width="2" height="4" fill="#fff" stroke="#000"/>
<rect x="1025.5" y="657.5" width="2" height="9" fill="#fff" stroke="#000"/>
<rect x="1029.5" y="646.5" width="2" height="11" fill="#fff" stroke="#000"/>
<rect x="1033.5" y="633.5" width="2" height="12" fill="#fff" stroke="#000"/>
<rect x="1037.5" y="624.5" width="2" height="9" fill="#fff" stroke="#000"/>
<rect x="1045.5" y="601.5" width="2" height="22" fill="#fff" stroke="#000"/>
<rect x="1061.5" y="595.5" width="2" height="24" fill="#fff" stroke="#000"/>
<rect x="1065.5" y="593.5" width="2" height="2" fill="#fff" stroke="#000"/>
<rect x="1069.5" y="576.5" width="2" height="16" fill="#fff" stroke="#000"/>
<rect x="1085.5" y="587.5" width="2" height="7" fill="#fff" stroke="#000"/>
<rect x="1093.5" y="594.5" width="2" height="2" fill="#fff" stroke="#000"/>
<rect x="1101.5" y="586.5" width="2" height="6" fill="#fff" stroke="#000"/>
<rect x="1109.5" y="587.5" width="2" height="4" fill="#fff" stroke="#000"/>
<rect x="1125.5" y="601.5" width="2" height="3" fill="#fff" stroke="#000"/>
<rect x="1129.5" y="574.5" width="2" height="26" fill="#fff" stroke="#000"/>
<rect x="1145.5" y="624.5" width="2" height="11" fill="#fff" stroke="#000"/>
<rect x="1153.5" y="629.5" width="2" height="17" fill="#fff" stroke="#000"/>
<rect x="1157.5" y="620.5" width="2" height="8" fill="#fff" stroke="#000"/>
<rect x="1161.5" y="616.5" width="2" height="3" fill="#fff" stroke="#000"/>
<rect x="1173.5" y="616.5" width="2" height="2" fill="#fff" stroke="#000"/>
<rect x="1177.5" y="603.5" width="2" height="13" fill="#fff" stroke="#000"/>
<rect x="1189.5" y="603.5" width="2" height="5" fill="#fff" stroke="#000"/>
<rect x="1193.5" y="594.5" width="2" height="8" fill="#fff" stroke="#000"/>
<rect x="1197.5" y="592.5" width="2" height="3" fill="#fff" stroke="#000"/>
<rect x="1213.5" y="587.5" width="2" height="9" fill="#fff" stroke="#000"/>
<rect x="1217.5" y="582.5" width="2" height="5" fill="#fff" stroke="#000"/>
<rect x="1229.5" y="596.5" width="2" height="2" fill="#fff" stroke="#000"/>
<rect x="1241.5" y="601.5" width="2" height="9" fill="#fff" stroke="#000"/>
<rect x="1253.5" y="604.5" width="2" height="3" fill="#fff" stroke="#000"/>
<rect x="1261.5" y="600.5" width="2" height="2" fill="#fff" stroke="#000"/>
<rect x="1269.5" y="594.5" width="2" height="7" fill="#fff" stroke="#000"/>
<rect x="1277.5" y="597.5" width="2" height="6" fill="#fff" stroke="#000"/>
<rect x="1285.5" y="595.5" width="2" height="8" fill="#fff" stroke="#000"/>
<rect x="1293.5" y="605.5" width="2" height="6" fill="#fff" stroke="#000"/>
<rect x="1297.5" y="600.5" width="2" height="4" fill="#fff" stroke="#000"/>
<rect x="1305.5" y="601.5" width="2" height="10" fill="#fff" stroke="#000"/>
<rect x="1309.5" y="596.5" width="2" height="3" fill="#fff" stroke="#000"/>
<rect x="1313.5" y="586.5" width="2" height="10" fill="#fff" stroke="#000"/>
<rect x="1321.5" y="582.5" width="2" height="15" fill="#fff" stroke="#000"/>
<rect x="1325.5" y="575.5" width="2" height="6" fill="#fff" stroke="#000"/>
<rect x="1365.5" y="636.5" width="2" height="3" fill="#fff" stroke="#000"/>
<rect x="1373.5" y="630.5" width="2" height="10" fill="#fff" stroke="#000"/>
<rect x="1381.5" y="616.5" width="2" height="13" fill="#fff" stroke="#000"/>
<rect x="1393.5" y="618.5" width="2" height="11" fill="#fff" stroke="#000"/>
<rect x="1401.5" y="606.5" width="2" height="11" fill="#fff" stroke="#000"/>
<rect x="1405.5" y="592.5" width="2" height="13" fill="#fff" stroke="#000"/>
<rect x="1409.5" y="588.5" width="2" height="3" fill="#fff" stroke="#000"/>
<rect x="1421.5" y="595.5" width="2" height="9" fill="#fff" stroke="#000"/>
<rect x="1425.5" y="569.5" width="2" height="25" fill="#fff" stroke="#000"/>
<rect x="1433.5" y="563.5" width="2" height="11" fill="#fff" stroke="#000"/>
<rect x="1449.5" y="560.5" width="2" height="17" fill="#fff" stroke="#000"/>
<rect x="1481.5" y="608.5" width="2" height="13" fill="#fff" stroke="#000"/>
<rect x="1485.5" y="605.5" width="2" height="3" fill="#fff" stroke="#000"/>
<rect x="1493.5" y="609.5" width="2" height="2" fill="#fff" stroke="#000"/>
<polyline points="2.0,161.0 34.0,112.0 40.0,102.0 194.9,74.3 200.7,74.3 206.1,76.1 212.4,77.6 216.8,78.9 222.2,82.1 226.7,82.5 233.0,85.7 240.1,88.8 245.5,91.0 250.8,94.2 258.0,96.8 265.2,100.4 272.3,103.1 279.5,104.0 284.9,103.6 290.2,105.8 297.4,106.7 302.8,108.5 315.3,111.6 326.0,116.5 337.7,117.4 342.1,127.3 349.3,158.6 354.7,178.8 368.7,248.9 382.7,323.6 388.5,356.0 394.4,379.7 400.0,410.0 406.1,445.1 409.6,457.7 411.1,470.0 413.6,479.9 416.5,498.8 418.0,507.8 419.5,512.7 422.5,518.7 425.5,524.7 429.5,528.6 432.4,530.6 435.4,533.6 438.4,537.6 449.2,545.9 463.6,564.9 477.9,586.4 496.9,610.2 513.6,634.1 522.0,641.5 526.0,644.5 530.0,645.7 535.0,643.0 540.0,639.8 561.1,619.5 568.6,611.5 572.6,607.6 577.4,604.0 590.9,591.7 594.8,590.1 602.8,583.3 607.6,581.7 614.7,580.1 617.9,578.5 621.9,578.9 627.4,579.7 633.8,582.5 640.0,580.9 650.0,577.0 659.8,569.1 671.7,562.7 681.6,561.2 695.5,560.2 706.5,566.2 713.4,568.6 720.0,575.6 743.8,620.0 751.8,630.0 753.8,635.9 759.7,641.9 765.7,648.8 773.6,658.8 779.6,664.7 785.6,667.7 791.5,673.7 798.5,678.6 801.5,679.6 807.4,679.6 810.4,681.1 814.0,681.6 821.0,683.4 833.9,686.3 841.8,688.8 849.8,694.3 859.7,694.8 865.7,696.3 871.6,696.3 874.6,695.3 879.6,696.8 891.5,698.3 899.5,702.2 910.0,705.7 932.8,706.6 943.3,707.6 953.7,704.1 965.6,699.1 969.6,696.7 976.6,690.2 981.5,687.2 991.5,682.2 998.4,679.3 1006.0,675.8 1016.9,670.5 1022.9,670.0 1030.8,668.0 1041.8,662.0 1048.7,656.0 1057.7,650.1 1063.6,645.1 1068.0,639.5 1071.6,634.7 1073.0,633.5 1079.5,626.2 1081.9,625.1 1083.5,622.7 1091.5,613.8 1091.8,613.6 1097.4,609.8 1097.8,609.7 1102.0,605.8 1105.7,602.7 1113.7,597.2 1121.6,595.3 1126.6,594.8 1133.6,592.3 1138.5,591.3 1141.5,592.3 1147.5,595.8 1154.4,601.2 1162.0,603.7 1172.9,607.2 1179.9,607.7 1189.8,610.2 1199.7,609.2 1209.7,610.2 1215.7,610.2 1227.6,604.3 1233.5,601.3 1240.5,600.3 1251.4,600.3 1258.0,599.3 1264.9,598.3 1288.8,599.8 1293.8,601.3 1301.7,603.2 1310.7,603.2 1325.6,598.3 1332.5,597.3 1339.5,597.3 1354.0,603.7 1365.9,609.7 1379.8,614.2 1387.7,614.7 1395.7,617.2 1405.6,620.1 1419.5,620.1 1429.0,614.1 1429.5,614.2 1436.9,607.6 1442.0,604.2 1444.9,601.1 1456.8,591.2 1462.8,588.7 1468.7,587.2 1484.6,587.2 1491.6,589.7 1498.0,590.4" fill="none" stroke="#0000ff" stroke-width="1"/>
<g stroke="none"><path d="M1351 634L1377 622" stroke="#e02818" stroke-width="1.3" stroke-dasharray="2.5 2.5"/><path d="M1349 621.5H1352V623.5H1354.5L1350.5 627.8L1346.5 623.5H1349Z" fill="#e02818" /><path d="M1346.5 627.6H1354.5L1350.5 632Z" fill="#e02818" /><path d="M1375 626.8L1378.5 622.8L1382 626.8H1380V629.2H1377V626.8Z" fill="#1060a8" /><path d="M1458.5 577.5V585" stroke="#e02818" stroke-width="1"/><path d="M1457 571.8H1460V574H1462.2L1458.5 577.8L1454.8 574H1457Z" fill="#e02818" /><path d="M1454.8 581.8L1458.5 578.8L1462.2 581.8H1460V584H1457V581.8Z" fill="#1060a8" /></g>
<rect x="1870" y="610" width="39" height="12" fill="#bababa"/><text x="1873" y="620" class="pl" style="fill:#fff">147.490</text>
<path d="M342.5 32V768" stroke="#ff0000" stroke-width="1"/>
<rect x="3" y="540" width="13" height="13" fill="#ff0000"/><rect x="4" y="541" width="11" height="11" fill="#000"/>
<rect x="1854" y="540" width="13" height="13" fill="#ff0000"/><rect x="1855" y="541" width="11" height="11" fill="#000"/>
<rect x="303" y="772" width="78" height="12" fill="#ff0000"/><text x="305" y="781" class="pl" style="fill:#fff">2025.08.01 12:30</text>
<path d="M1493 32H1503L1498 37Z" fill="#c8c8c8"/>
</svg>
<!-- chart title -->
<svg class="a" style="left:6px;top:36px" width="40" height="14">
  <rect x="1.5" y="1.5" width="14" height="10" rx="1.5" fill="#fff" stroke="#e03020"/><path d="M8.5 1.5H14A1.5 1.5 0 0 1 15.5 3V10A1.5 1.5 0 0 1 14 11.5H8.5Z" fill="#fff" stroke="#1a5fb0"/>
  <path d="M3.5 4H7M3.5 6.5H7M3.5 9H7" stroke="#e03020"/><path d="M9.5 4H13.5M9.5 6.5H13.5M9.5 9H13.5" stroke="#1a5fb0"/>
  <path d="M22.5 1.5H25.5V6.5H28V11.5H22.5Z" fill="#fff6d8" stroke="#e03020"/><path d="M30 5.5H33V1.5H35.5V11.5H30Z" fill="#c0e8f8" stroke="#1a5fb0"/><rect x="27.5" y="1" width="3" height="1.5" fill="#999"/>
</svg>
<div class="a" style="left:48px;top:37px;font-size:10px;color:#000;white-space:pre;letter-spacing:-0.2px">USDJPY, M15:  US Dollar vs Japanese Yen</div>
<!-- one click trading -->
<div class="a" style="left:6px;top:53px;width:187px;height:57px;background:#fff"></div>
<div class="a" style="left:6px;top:53px;width:44px;height:22px;background:linear-gradient(#f04a4a,#d02828)"></div>
<div class="a" style="left:6px;top:75px;width:93px;height:35px;background:linear-gradient(#d62a2a,#b00808)"></div>
<div class="a" style="left:149px;top:53px;width:44px;height:22px;background:linear-gradient(#f04a4a,#d02828)"></div>
<div class="a" style="left:101px;top:75px;width:92px;height:35px;background:linear-gradient(#d62a2a,#b00808)"></div>
<div class="a" style="left:10px;top:74px;width:36px;height:1px;background:#f3a0a0"></div>
<div class="a" style="left:153px;top:74px;width:36px;height:1px;background:#f3a0a0"></div>
<div class="a" style="left:15px;top:57px;font-size:11.5px;letter-spacing:-1px;color:#fff">SELL</div>
<div class="a" style="left:159px;top:57px;font-size:11.5px;letter-spacing:-0.6px;color:#fff">BUY</div>
<div class="a" style="left:52px;top:53px;width:95px;height:20px;background:#fafafa;border:1px solid #d8d8d8"></div>
<div class="a" style="left:71px;top:53px;width:57px;height:20px;background:#fff;border:1px solid #b8b0c8"></div>
<div class="a" style="left:86px;top:57px;width:38px;text-align:right;font-size:11px;color:#222">0.13</div>
<svg class="a" style="left:52px;top:53px" width="95" height="20"><path d="M7 8H12L9.5 11Z" fill="#222"/><path d="M82 10H88L85 7Z" fill="#222"/></svg>
<div class="a" style="left:25px;top:94px;font-size:11.5px;letter-spacing:-0.6px;color:#fff;font-weight:bold">147</div>
<div class="a" style="left:45px;top:76px;font-size:31px;color:#fff">49</div>
<div class="a" style="left:83px;top:81px;font-size:11px;color:#fff">0</div>
<div class="a" style="left:119px;top:94px;font-size:11.5px;letter-spacing:-0.6px;color:#fff;font-weight:bold">147</div>
<div class="a" style="left:139px;top:76px;font-size:31px;color:#fff">49</div>
<div class="a" style="left:178px;top:81px;font-size:11px;color:#fff">7</div>
<!-- chart tabs -->
<div class="a" style="left:0;top:789px;width:1920px;height:1px;background:#000"></div>
<div class="a" style="left:0;top:814px;width:1920px;height:1px;background:#a0a0a0"></div>
<div class="a" style="left:166px;top:789px;width:88px;height:19px;background:#fff;border:1px solid #000;border-top:none;box-shadow:1px 1px 0 #606060"></div>
<div class="ctab" style="left:15px">USDJPY,H4</div><div class="csep" style="left:84px"></div>
<div class="ctab" style="left:96px">USDJPY,H1</div>
<div class="ctab" style="left:177px;top:793px;color:#303040">USDJPY,M15</div>
<div class="ctab" style="left:266px">EURUSD,H4</div><div class="csep" style="left:339px"></div>
<div class="ctab" style="left:351px">EURUSD,H1</div><div class="csep" style="left:424px"></div>
<div class="ctab" style="left:435px">EURUSD,M5</div><div class="csep" style="left:509px"></div>
<div class="ctab" style="left:522px">EURJPY,H4</div><div class="csep" style="left:590px"></div>
<div class="ctab" style="left:603px">EURJPY,H1</div><div class="csep" style="left:671px"></div>
<div class="ctab" style="left:684px">EURJPY,M15</div>
<svg class="a" style="left:1880px;top:794px" width="30" height="10"><path d="M6 2L3 5L6 8Z M25 2L28 5L25 8Z" fill="#a8a0b8"/></svg>
<!-- toolbox sidebar -->
<div class="a" style="left:0;top:815px;width:16px;height:169px;background:#bccddc"></div>
<div class="a" style="left:3px;top:816px;font-size:14px;color:#000">&#x2715;</div>
<div class="a" style="left:-24px;top:939px;width:64px;font-size:10px;letter-spacing:-0.6px;line-height:12px;color:#222;transform:rotate(-90deg);white-space:nowrap">ツールボックス</div>
<!-- table -->
<table class="t">
<colgroup><col style="width:159px"><col style="width:152px"><col style="width:118px"><col style="width:101px"><col style="width:169px"><col style="width:169px"><col style="width:169px"><col style="width:169px"><col style="width:140px"><col style="width:169px"><col style="width:370px"></colgroup>
<tr class="h"><td style="text-align:left;padding-left:6px">時間 <span style="margin-left:16px;font-size:8px">&#x25B2;</span></td><td>銘柄</td><td>チケット</td><td>タイプ</td><td>数量</td><td>価格</td><td>決済逆指値(S/L)</td><td>決済指値(T/P)</td><td>時間</td><td>価格</td><td style="padding-right:6px;border-right:none">損益</td></tr>
<tr class="r1"><td style="text-align:left;padding-left:21px">2025.07.31 04:57:13</td><td>eurusd</td><td>890739845</td><td>sell</td><td>0.13</td><td>1.14322</td><td></td><td>1.14316</td><td>2025.07.31 06:18:48</td><td>1.14465</td><td class="neg">-2 766</td></tr>
<tr class="w"><td style="text-align:left;padding-left:21px">2025.08.06 03:30:17</td><td>usdjpy</td><td>896126011</td><td>sell</td><td>0.13</td><td>147.387</td><td class="pk">147.455</td><td>146.691</td><td>2025.08.06 05:17:10</td><td>147.455</td><td class="neg">-884</td></tr>
<tr class="g"><td style="text-align:left;padding-left:21px">2025.08.06 03:33:59</td><td>usdjpy</td><td>896129860</td><td>sell</td><td>0.13</td><td>147.409</td><td class="pk">147.457</td><td>146.687</td><td>2025.08.06 05:17:10</td><td>147.457</td><td class="neg">-624</td></tr>
<tr class="w"><td style="text-align:left;padding-left:21px">2025.08.06 10:25:12</td><td>usdjpy</td><td>896502407</td><td>sell</td><td>0.13</td><td>147.672</td><td class="pk">147.728</td><td>147.311</td><td>2025.08.06 10:28:03</td><td>147.728</td><td class="neg">-728</td></tr>
<tr class="g"><td style="text-align:left;padding-left:21px">2025.08.06 10:26:34</td><td>usdjpy</td><td>896503957</td><td>sell</td><td>0.13</td><td>147.710</td><td class="pk">147.731</td><td>146.771</td><td>2025.08.06 10:28:03</td><td>147.731</td><td class="neg">-273</td></tr>
</table>
<svg class="a" style="left:18px;top:839px" width="18" height="100" fill="#fff" stroke="#e03a2a" stroke-width="1.2">
  <rect x="4.5" y="2.5" width="10" height="14" rx="2"/><path d="M8 6.5H11M8 9H11" stroke-width="1"/>
  <rect x="4.5" y="22.5" width="10" height="14" rx="2"/><path d="M8 26.5H11M8 29H11" stroke-width="1"/>
  <rect x="4.5" y="42.5" width="10" height="14" rx="2"/><path d="M8 46.5H11M8 49H11" stroke-width="1"/>
  <rect x="4.5" y="62.5" width="10" height="14" rx="2"/><path d="M8 66.5H11M8 69H11" stroke-width="1"/>
  <rect x="4.5" y="82.5" width="10" height="14" rx="2"/><path d="M8 86.5H11M8 89H11" stroke-width="1"/>
</svg>
<!-- summary row -->
<div class="a" style="left:18px;top:939px;width:1885px;height:20px;background:#c8c8c8"></div>
<div class="a" style="left:18px;top:958px;width:1902px;height:1px;background:#000"></div>
<svg class="a" style="left:22px;top:942px" width="14" height="14"><circle cx="6.5" cy="6.5" r="5" fill="none" stroke="#333" stroke-width="1.2"/><path d="M4 6.5H9" stroke="#333" stroke-width="1.2"/></svg>
<div class="a" style="left:39px;top:942px;font-size:11px;font-weight:bold;letter-spacing:0.15px;color:#222;white-space:pre">損益: -61 758  クレジット: 0  入金: 432 281  出金: -332 160  残高: 38 363</div>
<div class="a" style="left:1859px;top:942px;font-size:11px;font-weight:bold;color:#222">-61 758</div>
<div class="a" style="left:1911px;top:925px;width:2px;height:17px;background:#6a6a7a"></div>
<!-- bottom tabs -->
<div class="a" style="left:16px;top:984px;width:1904px;height:1px;background:#a0a0a0"></div>
<div class="a" style="left:135px;top:958px;width:68px;height:21px;background:#fff;border:1px solid #000;border-top:none;box-shadow:1px 1px 0 #606060"></div>
<div class="btab" style="left:33px;width:23px;font-size:11.0px">取引</div><div class="bsep" style="left:67px"></div>
<div class="btab" style="left:77px;width:47px;font-size:11.0px">運用比率</div>
<div class="btab" style="left:145px;width:48px;color:#202020;font-size:11.0px">口座履歴</div>
<div class="btab" style="left:212px;width:36px;font-size:9.0px">ニュース</div><div class="bsep" style="left:257px"></div>
<div class="btab" style="left:267px;width:50px;font-size:10.0px">受信トレイ</div><div class="a" style="left:317px;top:967px;font-size:9px;color:#e02020">7</div><div class="bsep" style="left:336px"></div>
<div class="btab" style="left:346px;width:67px;font-size:9.57px">指標カレンダー</div><div class="bsep" style="left:424px"></div>
<div class="btab" style="left:434px;width:24px;font-size:11.0px">会社</div><div class="bsep" style="left:468px"></div>
<div class="btab" style="left:478px;width:34px;font-size:8.5px">アラート</div><div class="bsep" style="left:521px"></div>
<div class="btab" style="left:531px;width:24px;font-size:11.0px">記事</div><div class="bsep" style="left:565px"></div>
<div class="btab" style="left:575px;width:42px;font-size:8.4px">ライブラリ</div><div class="bsep" style="left:627px"></div>
<div class="btab" style="left:637px;width:54px;font-size:9.0px">エキスパート</div><div class="bsep" style="left:700px"></div>
<div class="btab" style="left:710px;width:42px;font-size:10.5px">操作ログ</div>
<svg class="a" style="left:1681px;top:962px" width="14" height="16"><path d="M4 5V3.5A3 3 0 0 1 10 3.5V5" fill="none" stroke="#c09000" stroke-width="1.3"/><rect x="1.5" y="5" width="11" height="10" fill="#f8c800" stroke="#d8a000"/></svg>
<div class="btab" style="left:1700px;top:964px;width:24px;color:#333;font-size:11.0px">市場</div>
<svg class="a" style="left:1735px;top:965px" width="16" height="12" fill="none" stroke="#1a62b0" stroke-width="1.2"><circle cx="8" cy="6" r="1.6" fill="#1a62b0" stroke="none"/><path d="M4.5 2.5A5 5 0 0 0 4.5 9.5M11.5 2.5A5 5 0 0 1 11.5 9.5M2 1A7.5 7.5 0 0 0 2 11M14 1A7.5 7.5 0 0 1 14 11"/></svg>
<div class="btab" style="left:1754px;top:964px;width:38px;color:#333;font-size:9.5px">シグナル</div>
<div class="a" style="left:1805px;top:964px;width:10px;height:12px;border:1.5px solid #1a62b0;border-radius:6px 6px 2px 2px"></div>
<!-- status bar -->
<div class="st" style="left:3px;top:988px;font-size:11px;letter-spacing:-0.5px">F1を押してヘルプを開く</div>
<div class="ssep" style="left:1160px"></div><div class="st" style="left:1166px">atari3</div>
<div class="ssep" style="left:1263px"></div><div class="st" style="left:1269px">2025.08.04 19:30</div>
<div class="ssep" style="left:1361px"></div><div class="st" style="left:1367px">O: 146.952</div>
<div class="ssep" style="left:1447px"></div><div class="st" style="left:1453px">H: 146.992</div>
<div class="ssep" style="left:1533px"></div><div class="st" style="left:1539px">L: 146.939</div>
<div class="ssep" style="left:1619px"></div><div class="st" style="left:1625px">C: 146.979</div>
<div class="ssep" style="left:1705px"></div>
<div class="ssep" style="left:1800px"></div>
<div class="a" style="left:1806px;top:999px;width:2px;height:5px;background:#30a030"></div>
<!-- clock overlay -->
<div class="a" style="left:1811px;top:959px;width:109px;height:47px;background:#000"></div>
<div class="a" style="left:1811px;top:960px;width:70px;text-align:right;font-size:11.5px;color:#fff;line-height:15px">21:48:45</div>
<div class="a" style="left:1811px;top:975px;width:68px;text-align:right;font-size:11.5px;color:#fff;line-height:15px">水曜日</div>
<div class="a" style="left:1811px;top:991px;width:70px;text-align:right;font-size:11.5px;color:#fff;line-height:15px">2025/08/06</div>
</body></html>
